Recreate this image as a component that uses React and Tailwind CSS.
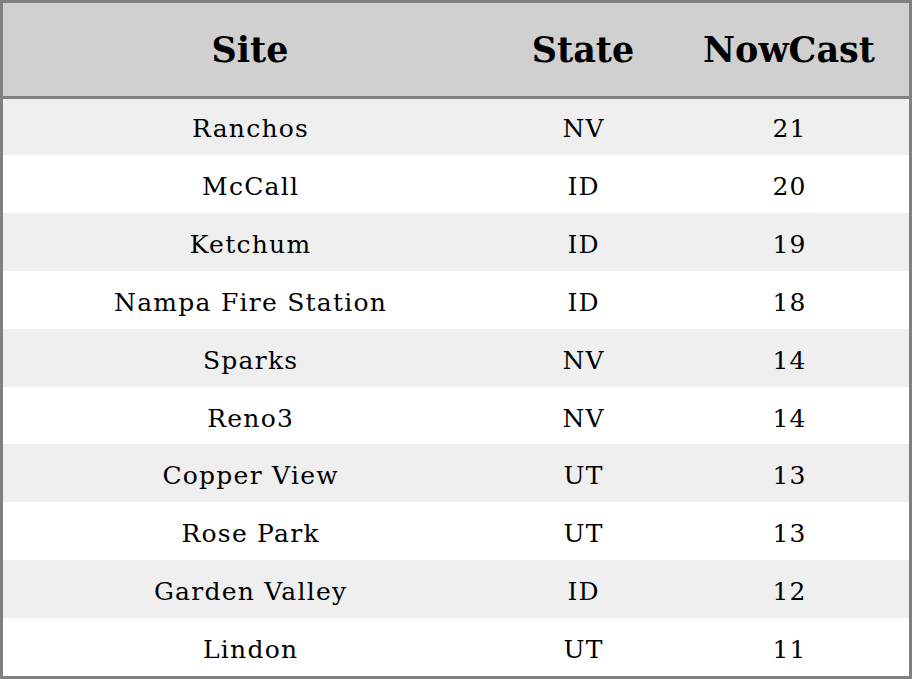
const rows = [
  ["Ranchos", "NV", "21"],
  ["McCall", "ID", "20"],
  ["Ketchum", "ID", "19"],
  ["Nampa Fire Station", "ID", "18"],
  ["Sparks", "NV", "14"],
  ["Reno3", "NV", "14"],
  ["Copper View", "UT", "13"],
  ["Rose Park", "UT", "13"],
  ["Garden Valley", "ID", "12"],
  ["Lindon", "UT", "11"],
];

export default function App() {
  return (
    <div className="w-[912px] h-[679px] bg-white" style={{ fontFamily: '"DejaVu Serif", serif' }}>
      <div className="w-[912px] h-[679px] border-[3px] border-[#808080] flex flex-col">
        <div className="flex h-[93px] bg-[#d0d0d0] border-b-[3px] border-[#808080] shrink-0 box-content text-black font-bold text-[35px] leading-none">
          <div className="w-[494px] flex items-center justify-center">Site</div>
          <div className="w-[172px] flex items-center justify-center">State</div>
          <div className="flex-1 flex items-center justify-center">NowCast</div>
        </div>
        <div className="flex-1 flex flex-col">
          {rows.map((r, i) => (
            <div
              key={i}
              className={`flex ${i === 0 ? "h-[56px] shrink-0 pt-[2px]" : "flex-1 pt-[5px]"} text-[25px] leading-none tracking-[1.25px] text-black ${i % 2 === 0 ? "bg-[#efefef]" : "bg-white"}`}
            >
              <div className="w-[494px] flex items-center justify-center pl-[1.25px]">{r[0]}</div>
              <div className="w-[172px] flex items-center justify-center pl-[1.25px]">{r[1]}</div>
              <div className="flex-1 flex items-center justify-center pl-[1.25px]">{r[2]}</div>
            </div>
          ))}
        </div>
      </div>
    </div>
  );
}
